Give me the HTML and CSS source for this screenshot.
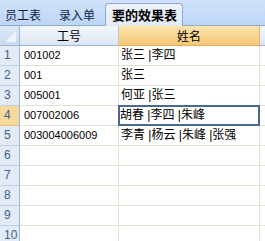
FILE: index.html
```html
<!DOCTYPE html>
<html lang="zh">
<head>
<meta charset="utf-8">
<link rel="stylesheet" href="styles.css">
</head>
<body>
<div class="tabs">
  <div class="tab first">员工表</div>
  <div class="tab second">录入单</div>
  <div class="tab active">要的效果表</div>
</div>
<div class="sheet">
  <div class="corner"><span class="tri"></span></div>
  <div class="colhead">工号</div>
  <div class="colhead sel">姓名</div>
  <div class="colhead rest"></div>

  <div class="rowhead">1</div><div class="cell num">001002</div><div class="cell name">张三 |李四</div><div class="cell rest"></div>
  <div class="rowhead">2</div><div class="cell num">001</div><div class="cell name">张三</div><div class="cell rest"></div>
  <div class="rowhead">3</div><div class="cell num">005001</div><div class="cell name">何亚 |张三</div><div class="cell rest"></div>
  <div class="rowhead sel">4</div><div class="cell num">007002006</div><div class="cell name active">胡春 |李四 |朱峰</div><div class="cell rest"></div>
  <div class="rowhead">5</div><div class="cell num">003004006009</div><div class="cell name">李青 |杨云 |朱峰 |张强</div><div class="cell rest"></div>
  <div class="rowhead">6</div><div class="cell num"></div><div class="cell name"></div><div class="cell rest"></div>
  <div class="rowhead">7</div><div class="cell num"></div><div class="cell name"></div><div class="cell rest"></div>
  <div class="rowhead">8</div><div class="cell num"></div><div class="cell name"></div><div class="cell rest"></div>
  <div class="rowhead">9</div><div class="cell num"></div><div class="cell name"></div><div class="cell rest"></div>
  <div class="rowhead">10</div><div class="cell num"></div><div class="cell name"></div><div class="cell rest"></div>
</div>
</body>
</html>
```
FILE: styles.css
```css
html, body {
  margin: 0;
  padding: 0;
  background: #ffffff;
  overflow: hidden;
}
body {
  width: 265px;
  height: 241px;
  font-family: "Liberation Sans", "Noto Sans CJK SC", sans-serif;
  color: #000;
}
.tabs {
  height: 25px;
  border-bottom: 1px solid #8eabd2;
  background: linear-gradient(#cfe2fa, #bdd6f6);
  display: flex;
  align-items: flex-end;
  padding-left: 5px;
}
.tab {
  font-family: "Noto Sans CJK SC", sans-serif;
  font-size: 12px;
  line-height: 21px;
  height: 21px;
  padding: 0;
  color: #10243f;
}
.tab.first {
  margin-right: 18px;
}
.tab.second {
  margin-right: 10px;
}
.tab.active {
  font-weight: bold;
  font-size: 13px;
  padding: 0 5px 0 6px;
  height: 22px;
  line-height: 21px;
  margin-bottom: -1px;
  border: 1px solid #8eabd2;
  border-bottom: none;
  border-radius: 4px 4px 0 0;
  background: linear-gradient(#eef3fb, #e2eaf6);
  color: #000;
}
.sheet {
  display: grid;
  grid-template-columns: 20px 99px 141px 1fr;
  grid-auto-rows: 20px;
}
.corner {
  position: relative;
  background: linear-gradient(#dce7f5, #c9dbef);
  border-right: 1px solid #9fb6d3;
  border-bottom: 1px solid #9fb6d3;
  box-sizing: border-box;
}
.tri {
  position: absolute;
  right: 3px;
  bottom: 3px;
  width: 0;
  height: 0;
  border-left: 11px solid transparent;
  border-bottom: 11px solid #eef3fa;
}
.colhead {
  box-sizing: border-box;
  background: linear-gradient(#f3f7fc, #dbe6f3);
  border-right: 1px solid #b4c8df;
  border-bottom: 1px solid #9fb6d3;
  text-align: center;
  font-family: "Noto Sans CJK SC", sans-serif;
  font-size: 12px;
  line-height: 19px;
}
.colhead.sel {
  background: linear-gradient(#fbe3ac, #f5c878);
  border-right: 1px solid #eab45c;
  border-bottom: 1px solid #eda94a;
}
.colhead.rest {
  border-right: none;
}
.rowhead {
  box-sizing: border-box;
  background: #e3ebf6;
  border-right: 1px solid #9fb6d3;
  border-bottom: 1px solid #bfd0e6;
  color: #3e5f8d;
  font-size: 12px;
  line-height: 19px;
  padding-left: 4px;
}
.rowhead.sel {
  background: #f9d99a;
  border-bottom-color: #e8c07a;
}
.cell {
  box-sizing: border-box;
  border-right: 1px solid #e2e2d0;
  border-bottom: 1px solid #e2e2d0;
  line-height: 19px;
  white-space: nowrap;
  overflow: hidden;
}
.cell.num {
  font-size: 11px;
  padding-left: 4px;
}
.cell.name {
  font-size: 12px;
  padding-left: 2px;
}
.cell.name.active {
  border: 2px solid #4a6891;
  line-height: 16px;
  padding-left: 0;
  margin: -1px 0 0 -1px;
  width: 142px;
  height: 21px;
}
.cell.rest {
  border-right: none;
}
```
